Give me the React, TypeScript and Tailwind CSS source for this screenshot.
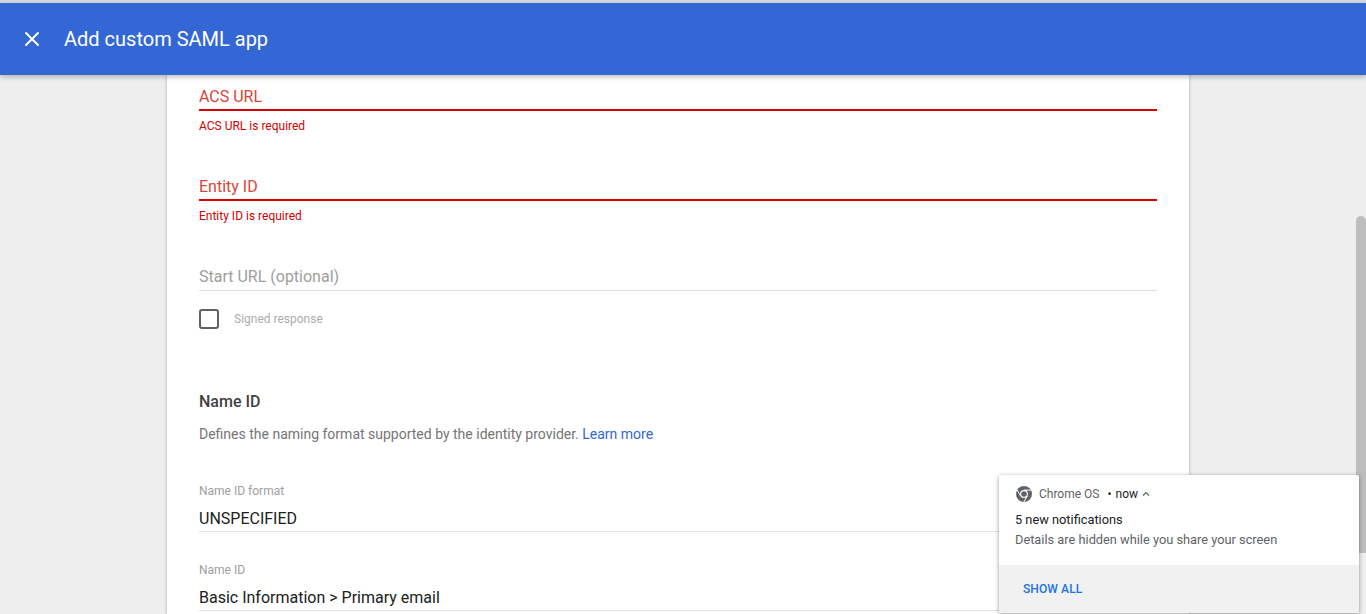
import { X } from "lucide-react";

function ErrorField({ label, error }: { label: string; error: string }) {
  return (
    <div className="h-[90px]">
      <div className="border-b-2 border-[#d50000] h-[26px] text-base leading-6 text-[#db4437]">{label}</div>
      <p className="mt-[7px] text-xs leading-4 text-[#d50000]">{error}</p>
    </div>
  );
}

function ValueField({ label, value }: { label: string; value: string }) {
  return (
    <div>
      <p className="text-xs leading-4 text-[#9e9e9e]">{label}</p>
      <div className="mt-[7px] h-[26px] border-b border-[#e0e0e0] pt-px text-base leading-6 text-[#212121]">{value}</div>
    </div>
  );
}

function ChromeIcon() {
  return (
    <svg className="ml-px" width="16" height="16" viewBox="0 0 16 16">
      <circle cx="8" cy="8" r="8" fill="#5f6368" />
      <circle cx="8" cy="8" r="3.9" fill="#fff" />
      <circle cx="8" cy="8" r="2.8" fill="#5f6368" />
      <path d="M8 4.1h7.2M4.6 10 1.2 4M11.4 10l-3.6 6" stroke="#fff" strokeWidth="1" fill="none" />
    </svg>
  );
}

export default function App() {
  return (
    <div className="relative flex h-[614px] w-[1366px] flex-col overflow-hidden bg-[#eeeeee] font-['Roboto',sans-serif]">
      <div className="h-[3px] bg-[#d9d9d9]" />
      <header className="relative z-10 flex h-[72px] items-center bg-[#3367d6] shadow-[0_2px_5px_rgba(0,0,0,0.26)]">
        <X className="ml-[20px] text-white" size={24} strokeWidth={2} />
        <h1 className="ml-[20px] text-xl font-normal text-white">Add custom SAML app</h1>
      </header>
      <main className="ml-[167px] mr-[177px] flex-1 bg-white px-8 pt-[10px] shadow-[0_0_3px_rgba(0,0,0,0.3)]">
        <ErrorField label="ACS URL" error="ACS URL is required" />
        <ErrorField label="Entity ID" error="Entity ID is required" />
        <div className="h-[26px] border-b border-[#e0e0e0] text-base leading-6 text-[#9e9e9e]">Start URL (optional)</div>
        <div className="mt-[18px] flex items-center">
          <span className="h-5 w-5 rounded-[3px] border-2 border-[#616161]" />
          <span className="ml-[15px] text-xs text-[#ababab]">Signed response</span>
        </div>
        <h2 className="mt-[61px] text-base leading-6 font-medium text-[#424242]">Name ID</h2>
        <p className="mt-[10px] text-sm leading-5 text-[#757575]">
          Defines the naming format supported by the identity provider.{" "}
          <a className="text-[#3367d6]">Learn more</a>
        </p>
        <div className="mt-[39px]">
          <ValueField label="Name ID format" value="UNSPECIFIED" />
        </div>
        <div className="mt-[30px]">
          <ValueField label="Name ID" value="Basic Information > Primary email" />
        </div>
      </main>
      <div className="absolute top-[216px] right-0 h-[337px] w-[10px] rounded-t-[5px] bg-[#bdbdbd]" />
      <aside className="absolute top-[475px] left-[999px] z-20 w-[360px] overflow-hidden rounded-[2px] bg-white shadow-[0_1px_4px_rgba(0,0,0,0.4)]">
        <div className="h-[90px] px-4 pt-[11px]">
          <div className="flex h-4 items-center text-xs">
            <ChromeIcon />
            <span className="ml-[7px] text-[#5f6368]">Chrome OS</span>
            <span className="ml-[8px] text-[#202124]">•</span>
            <span className="ml-[4px] text-[#202124]">now</span>
            <svg className="ml-[4px]" width="8" height="6" viewBox="0 0 8 6">
              <path d="M1 4.5 4 1.5l3 3" stroke="#5f6368" strokeWidth="1.2" fill="none" />
            </svg>
          </div>
          <p className="mt-2 text-[12.8px] leading-5 text-[#202124]">5 new notifications</p>
          <p className="text-[12.8px] leading-5 text-[#5f6368]">Details are hidden while you share your screen</p>
        </div>
        <div className="flex h-[48px] items-center bg-[#f1f1f1] px-6 text-xs font-medium tracking-[0.1px] text-[#1a73e8]">SHOW ALL</div>
      </aside>
    </div>
  );
}
